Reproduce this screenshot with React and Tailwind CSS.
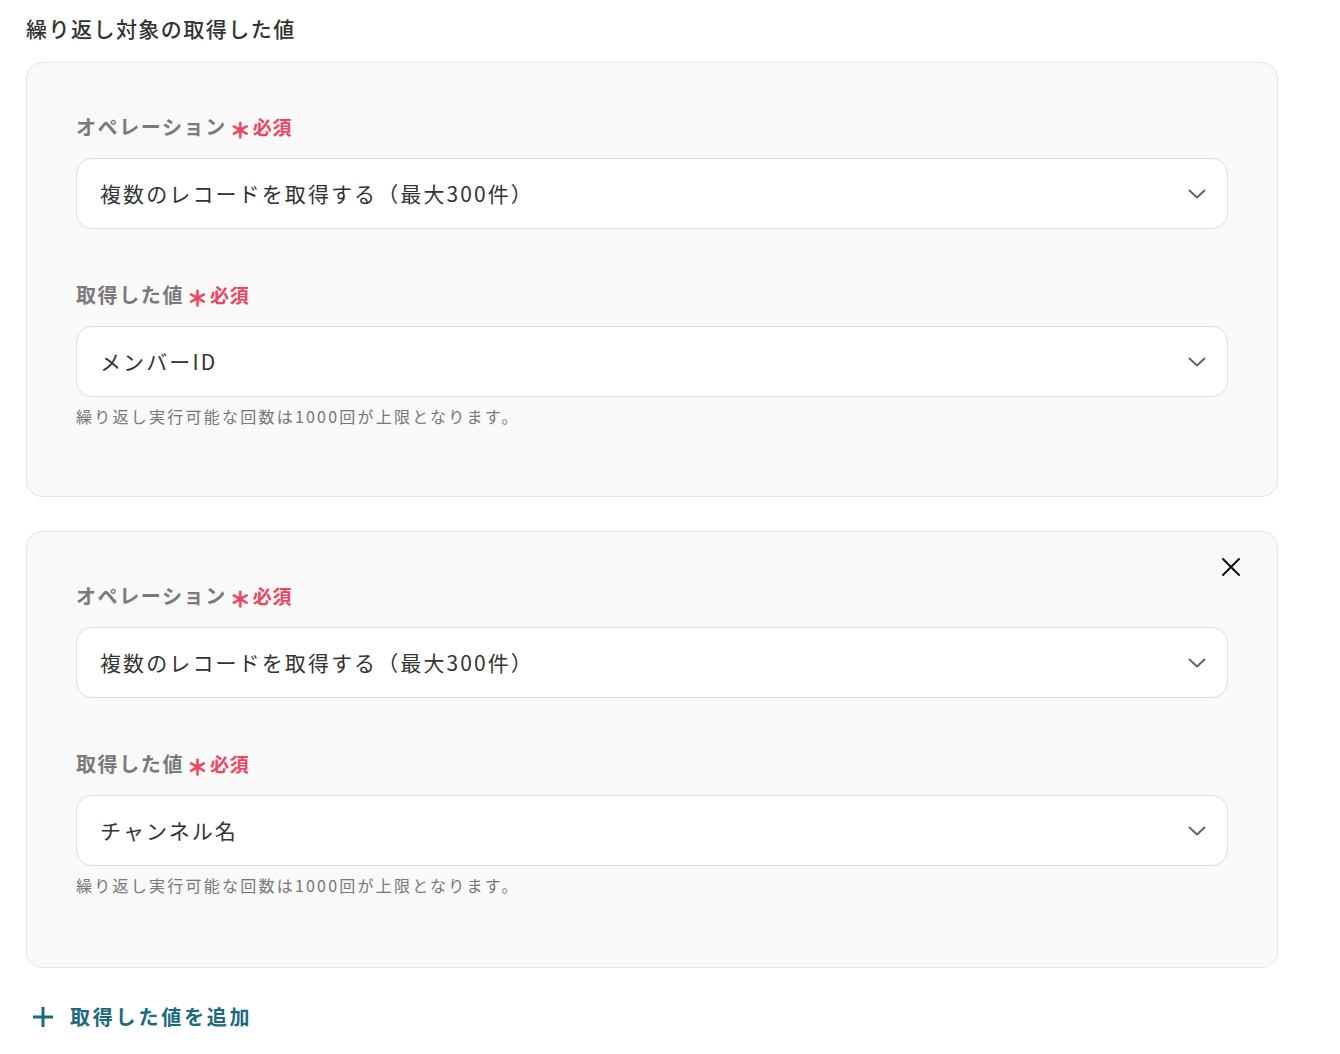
import React from 'react';

const font = { fontFamily: '"Noto Sans CJK JP", "Noto Sans", sans-serif' };

function Chevron() {
  return (
    <svg width="18" height="10" viewBox="0 0 18 10" fill="none">
      <path d="M1.5 1.5 L9 8.5 L16.5 1.5" stroke="#666" strokeWidth="2" strokeLinecap="round" strokeLinejoin="round" />
    </svg>
  );
}

function Required() {
  return (
    <span className="ml-[3px] flex items-center text-[#f0435e] font-bold">
      <span className="text-[21px] leading-none mt-[4px] mr-[2px] [-webkit-text-stroke:0.6px_#f0435e]">＊</span>
      <span className="text-[19px] tracking-[0.04em]">必須</span>
    </span>
  );
}

function Field({ label, value }) {
  return (
    <div>
      <div className="flex items-center h-[28px]">
        <span className="text-[20px] font-bold text-[#7a7a7a] tracking-[0.08em]">{label}</span>
        <Required />
      </div>
      <div className="mt-[17px] h-[71px] bg-white border border-[#dde0e5] rounded-[16px] flex items-center justify-between pl-[23px] pr-[21px]">
        <span className="text-[21px] text-[#333] tracking-[0.1em]">{value}</span>
        <Chevron />
      </div>
    </div>
  );
}

function LoopCard({ value, removable }) {
  return (
    <div className={`relative w-[1252px] bg-[#f9f9f9] border border-[#e4e5e7] rounded-[16px] pl-[49px] pr-[49px] pt-[50px] ${removable ? 'pb-[70px]' : 'pb-[68px]'}`}>
      {removable && (
        <button className="absolute top-[25px] right-[36px] p-0">
          <svg width="20" height="20" viewBox="0 0 20 20" fill="none">
            <path d="M2 2 L18 18 M18 2 L2 18" stroke="#111" strokeWidth="2" strokeLinecap="round" />
          </svg>
        </button>
      )}
      <Field label="オペレーション" value="複数のレコードを取得する（最大300件）" />
      <div className="mt-[52px]">
        <Field label="取得した値" value={value} />
      </div>
      <p className="mt-[7px] text-[16px] leading-[24px] text-[#777] tracking-[0.14em]">
        繰り返し実行可能な回数は1000回が上限となります。
      </p>
    </div>
  );
}

export default function App() {
  return (
    <div className="w-[1340px] h-[1054px] bg-white pl-[26px] pt-[13px]" style={font}>
      <h2 className="text-[21px] leading-[30px] font-medium text-[#333] tracking-[0.07em]">繰り返し対象の取得した値</h2>
      <div className="mt-[19px] flex flex-col gap-[34px]">
        <LoopCard value="メンバーID" />
        <LoopCard value="チャンネル名" removable />
      </div>
      <button className="mt-[34px] ml-[6px] flex items-center gap-[16px] text-[#1b6a80]">
        <svg width="22" height="22" viewBox="0 0 22 22" fill="none">
          <path d="M11 1 V21 M1 11 H21" stroke="#1b6a80" strokeWidth="3" />
        </svg>
        <span className="text-[20px] font-bold tracking-[0.14em]">取得した値を追加</span>
      </button>
    </div>
  );
}
